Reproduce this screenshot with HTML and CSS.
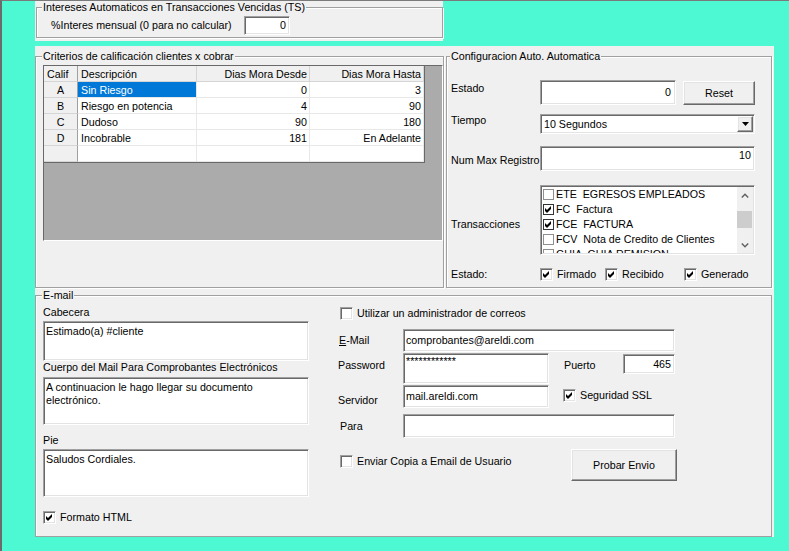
FILE: index.html
```html
<!DOCTYPE html>
<html lang="es">
<head>
<meta charset="utf-8">
<title>Configuración</title>
<link rel="stylesheet" href="styles.css">
</head>
<body>
<div class="screen">

  <section class="panel panel-top">
    <fieldset class="group g-interes">
      <legend>Intereses Automaticos en Transacciones Vencidas (TS)</legend>
      <div class="interes-row">
        <span class="interes-label">%Interes mensual (0 para no calcular)</span>
        <div class="field line num interes-input">0</div>
      </div>
    </fieldset>
  </section>

  <section class="panel panel-mid">
    <fieldset class="group g-crit">
      <legend>Criterios de calificación clientes x cobrar</legend>
      <div class="grid-box">
        <div class="grid">
          <div class="c fx hd lft">Calif</div>
          <div class="c hd">Descripción</div>
          <div class="c hd r">Dias Mora Desde</div>
          <div class="c hd r">Dias Mora Hasta</div>

          <div class="c fx">A</div>
          <div class="c sel">Sin Riesgo</div>
          <div class="c r">0</div>
          <div class="c r">3</div>

          <div class="c fx">B</div>
          <div class="c">Riesgo en potencia</div>
          <div class="c r">4</div>
          <div class="c r">90</div>

          <div class="c fx">C</div>
          <div class="c">Dudoso</div>
          <div class="c r">90</div>
          <div class="c r">180</div>

          <div class="c fx">D</div>
          <div class="c">Incobrable</div>
          <div class="c r">181</div>
          <div class="c r">En Adelante</div>

          <div class="c fx"></div>
          <div class="c"></div>
          <div class="c"></div>
          <div class="c"></div>
        </div>
      </div>
    </fieldset>

    <fieldset class="group g-conf">
      <legend>Configuracion Auto. Automatica</legend>
      <div class="conf">
        <div class="conf-row row-estado">
          <span class="lbl lbl-estado">Estado</span>
          <div class="field line num estado-input">0</div>
          <button class="btn raised reset" type="button">Reset</button>
        </div>
        <div class="conf-row row-tiempo">
          <span class="lbl">Tiempo</span>
          <div class="field select">
            <span class="sel-text">10 Segundos</span>
            <span class="drop raised">
              <svg width="7" height="4" viewBox="0 0 7 4"><polygon points="0,0 7,0 3.5,4" fill="#000"/></svg>
            </span>
          </div>
        </div>
        <div class="conf-row row-max">
          <span class="lbl lbl-max">Num Max Registro</span>
          <div class="field max-input">10</div>
        </div>
        <div class="conf-row row-trans">
          <span class="lbl lbl-trans">Transacciones</span>
          <div class="field listbox">
            <ul class="items">
              <li><span class="lbox"></span>ETE  EGRESOS EMPLEADOS</li>
              <li><span class="lbox on"><svg width="9" height="9" viewBox="0 0 9 9"><polygon points="1,3 3,5 7,1 7,4 3,8 1,6" fill="#000"/></svg></span>FC  Factura</li>
              <li><span class="lbox on"><svg width="9" height="9" viewBox="0 0 9 9"><polygon points="1,3 3,5 7,1 7,4 3,8 1,6" fill="#000"/></svg></span>FCE  FACTURA</li>
              <li><span class="lbox"></span>FCV  Nota de Credito de Clientes</li>
              <li><span class="lbox"></span>GUIA  GUIA REMISION</li>
            </ul>
            <div class="vscroll">
              <span class="sarrow">
                <svg width="8" height="5" viewBox="0 0 8 5"><polyline points="0.8,4.5 4,1.2 7.2,4.5" fill="none" stroke="#606060" stroke-width="1.4"/></svg>
              </span>
              <span class="track"><span class="thumb"></span></span>
              <span class="sarrow">
                <svg width="8" height="5" viewBox="0 0 8 5"><polyline points="0.8,0.5 4,3.8 7.2,0.5" fill="none" stroke="#606060" stroke-width="1.4"/></svg>
              </span>
            </div>
          </div>
        </div>
        <div class="conf-row row-state">
          <span class="lbl">Estado:</span>
          <label class="chk st-firm"><span class="box"><svg width="11" height="11" viewBox="0 0 11 11"><polygon points="2,4 4,6 8,2 8,5 4,9 2,7" fill="#000"/></svg></span>Firmado</label>
          <label class="chk st-rec"><span class="box"><svg width="11" height="11" viewBox="0 0 11 11"><polygon points="2,4 4,6 8,2 8,5 4,9 2,7" fill="#000"/></svg></span>Recibido</label>
          <label class="chk st-gen"><span class="box"><svg width="11" height="11" viewBox="0 0 11 11"><polygon points="2,4 4,6 8,2 8,5 4,9 2,7" fill="#000"/></svg></span>Generado</label>
        </div>
      </div>
    </fieldset>
  </section>

  <section class="panel panel-mail">
    <fieldset class="group g-mail">
      <legend>E-mail</legend>
      <div class="mail-cols">
        <div class="mail-left">
          <div class="mlbl m-cab">Cabecera</div>
          <div class="field area a-cab">Estimado(a) #cliente</div>
          <div class="mlbl m-cue">Cuerpo del Mail Para Comprobantes Electrónicos</div>
          <div class="field area a-cue">A continuacion le hago llegar su documento electrónico.</div>
          <div class="mlbl m-pie">Pie</div>
          <div class="field area a-pie">Saludos Cordiales.</div>
          <label class="chk m-html"><span class="box"><svg width="11" height="11" viewBox="0 0 11 11"><polygon points="2,4 4,6 8,2 8,5 4,9 2,7" fill="#000"/></svg></span>Formato HTML</label>
        </div>

        <div class="mail-right">
          <div class="r-util">
            <label class="chk"><span class="box"></span>Utilizar un administrador de correos</label>
          </div>
          <div class="r-row r-mail">
            <span class="rlbl"><u>E</u>-Mail</span>
            <div class="field line wide">comprobantes@areldi.com</div>
          </div>
          <div class="r-row r-pass">
            <span class="rlbl lbl-pass">Password</span>
            <div class="field pass">************</div>
            <span class="lbl-puerto">Puerto</span>
            <div class="field line num puerto">465</div>
          </div>
          <div class="r-row r-serv">
            <span class="rlbl lbl-serv">Servidor</span>
            <div class="field line serv">mail.areldi.com</div>
            <label class="chk ssl"><span class="box"><svg width="11" height="11" viewBox="0 0 11 11"><polygon points="2,4 4,6 8,2 8,5 4,9 2,7" fill="#000"/></svg></span>Seguridad SSL</label>
          </div>
          <div class="r-row r-para">
            <span class="rlbl lbl-para">Para</span>
            <div class="field line wide para"></div>
          </div>
          <div class="r-row r-send">
            <label class="chk copia"><span class="box"></span>Enviar Copia a Email de Usuario</label>
            <button class="btn raised probar" type="button">Probar Envio</button>
          </div>
        </div>
      </div>
    </fieldset>
  </section>

</div>
</body>
</html>
```
FILE: styles.css
```css
* { box-sizing: border-box; }

html, body { margin: 0; padding: 0; }

body {
  width: 789px;
  height: 551px;
  overflow: hidden;
  background: #4cf9d2;
  font-family: "Liberation Sans", Arial, sans-serif;
  font-size: 10.7px;
  line-height: 13px;
  color: #000;
}

.screen {
  height: 551px;
  border-left: 2px solid #6b6b6b;
  border-top: 1px solid #7a7a7a;
  padding-left: 33px;
}

.panel { background: #f0f0f0; }

.panel-top { width: 408px; height: 40px; }

.panel-mid {
  width: 739px;
  height: 243px;
  margin-top: 5px;
  padding-top: 4px;
  display: flex;
}

.panel-mail { width: 739px; height: 248px; }

/* group boxes (etched frame) */
.group {
  margin: 0;
  padding: 0;
  min-width: 0;
  border: 1px solid #a0a0a0;
  box-shadow: inset 1px 1px 0 #fff, 1px 1px 0 #fff;
}

.group > legend {
  padding: 0 1px;
  margin-left: 6px;
  line-height: 13px;
  background: #f0f0f0;
}

.g-interes { margin-left: 1px; width: 407px; height: 37px; }
.g-interes > legend { margin-left: 5px; }

.g-crit { width: 409px; height: 238px; }
.g-conf { margin-left: 2px; width: 326px; height: 238px; }
.g-conf > legend { margin-left: 3px; }
.g-mail { width: 737px; height: 248px; box-shadow: inset 1px 1px 0 #fff; }

/* sunken fields */
.field {
  background: #fff;
  border: 1px solid;
  border-color: #a0a0a0 #fff #fff #a0a0a0;
  box-shadow: inset 1px 1px 0 #696969, inset -1px -1px 0 #e3e3e3;
  white-space: nowrap;
  overflow: hidden;
}

.line {
  display: flex;
  align-items: center;
  padding: 0 3px;
}

.num { justify-content: flex-end; }

/* raised buttons */
.raised {
  background: #f0f0f0;
  border: 1px solid;
  border-color: #fff #696969 #696969 #fff;
  box-shadow: inset -1px -1px 0 #a0a0a0, inset 1px 1px 0 #e3e3e3;
}

.btn {
  font: inherit;
  color: #000;
  padding: 0;
  margin: 0;
}

/* checkboxes */
.chk {
  display: flex;
  align-items: center;
  gap: 4px;
  white-space: nowrap;
}

.box {
  flex: none;
  width: 13px;
  height: 13px;
  background: #fff;
  border: 1px solid;
  border-color: #a0a0a0 #fff #fff #a0a0a0;
  box-shadow: inset 1px 1px 0 #696969, inset -1px -1px 0 #e3e3e3;
}

.box svg { display: block; }

/* top panel */
.interes-row {
  display: flex;
  align-items: center;
  margin-top: 2px;
  padding-left: 14px;
}

.interes-label { width: 193px; white-space: nowrap; }
.interes-input { width: 46px; height: 19px; }

/* grid */
.grid-box {
  margin: 2px 0 0 7px;
  width: 400px;
  height: 176px;
  background: #ababab;
  border: 1px solid;
  border-color: #696969 #fff #fff #696969;
}

.grid {
  display: grid;
  grid-template-columns: 34px 119px 113px 114px;
  grid-auto-rows: 16px;
  width: 381px;
  background: #fff;
  border-right: 1px solid #696969;
  border-bottom: 1px solid #696969;
}

.c {
  border-right: 1px solid #e8e8e8;
  border-bottom: 1px solid #e8e8e8;
  padding: 2px 3px 0;
  line-height: 13px;
  white-space: nowrap;
  overflow: hidden;
}

.c.r { text-align: right; padding-right: 2px; }

.hd { background: #f0f0f0; border-bottom-color: #d5d5d5; border-right-color: #d5d5d5; }

.fx {
  background: #f0f0f0;
  text-align: center;
  border-right-color: #a0a0a0;
  border-bottom-color: #d5d5d5;
}

.fx.lft { text-align: left; padding-left: 3px; }

.sel { background: #0078d7; color: #fff; }

/* config */
.conf { padding-left: 4px; }

.conf-row { display: flex; }

.lbl { width: 89px; flex: none; white-space: nowrap; }

.row-estado { margin-top: 17px; height: 25px; }
.lbl-estado { margin-top: 2px; }
.estado-input { width: 136px; height: 25px; padding-right: 4px; }
.reset { margin-left: 7px; margin-top: 1px; width: 72px; height: 24px; }

.row-tiempo { margin-top: 9px; height: 20px; }

.select {
  width: 215px;
  height: 20px;
  display: flex;
  align-items: center;
  padding: 1px;
}

.sel-text { flex: 1; padding-left: 2px; }

.drop {
  width: 16px;
  height: 16px;
  display: flex;
  align-items: center;
  justify-content: center;
}

.drop svg { display: block; }

.row-max { margin-top: 12px; height: 25px; }
.lbl-max { margin-top: 8px; }
.max-input { width: 215px; height: 25px; text-align: right; padding: 2px 3px 0; }

.row-trans { margin-top: 14px; height: 70px; }
.lbl-trans { margin-top: 33px; }

.listbox {
  width: 215px;
  height: 70px;
  display: flex;
  padding: 1px;
}

.items {
  flex: 1;
  margin: 0;
  padding: 0;
  list-style: none;
  overflow: hidden;
}

.items li {
  height: 15px;
  display: flex;
  align-items: center;
  white-space: pre;
}

.lbox {
  flex: none;
  width: 11px;
  height: 11px;
  margin: 0 2px 0 1px;
  background: #fff;
  border: 1px solid #8f8f8f;
}

.lbox.on { border-color: #333; }
.lbox svg { display: block; }

.vscroll {
  width: 16px;
  display: flex;
  flex-direction: column;
  background: #f0f0f0;
}

.sarrow {
  height: 16px;
  display: flex;
  align-items: center;
  justify-content: center;
}

.sarrow svg { display: block; }

.track { flex: 1; }

.thumb {
  display: block;
  margin: 8px 1px 0 0;
  height: 17px;
  background: #cdcdcd;
}

.row-state { margin-top: 11px; height: 17px; align-items: center; }
.st-firm { width: 65px; }
.st-rec { width: 79px; }

/* mail */
.mail-cols { display: flex; }

.mail-left { width: 273px; padding-left: 7px; }

.mlbl { white-space: nowrap; }

.area {
  width: 266px;
  padding: 3px 2px 0 2px;
  line-height: 13px;
  white-space: normal;
}

.m-cab { margin-top: 4px; }
.a-cab { margin-top: 2px; height: 40px; }
.m-cue { margin-top: 0; }
.a-cue { margin-top: 3px; height: 48px; }
.m-pie { margin-top: 9px; }
.a-pie { margin-top: 2px; height: 48px; }
.m-html { margin-top: 14px; }

.mail-right { margin-left: 29px; width: 400px; }

.r-util { margin-top: 5px; margin-left: 2px; }

.r-row { display: flex; }

.rlbl { width: 65px; flex: none; white-space: nowrap; padding-left: 1px; }

.r-mail { margin-top: 9px; height: 23px; align-items: center; }
.wide { width: 272px; height: 23px; padding-left: 2px; }

.r-pass { margin-top: 1px; height: 31px; }
.lbl-pass { margin-top: 6px; padding-left: 0; }
.pass { width: 146px; height: 31px; padding: 1px 2px 0; }
.lbl-puerto { margin-left: 15px; width: 59px; margin-top: 6px; }
.puerto { width: 52px; height: 20px; margin-top: 1px; }

.r-serv { margin-top: 1px; height: 23px; }
.lbl-serv { margin-top: 9px; padding-left: 0; }
.serv { width: 146px; height: 23px; padding-left: 2px; }
.ssl { margin-left: 14px; margin-top: 4px; height: 13px; }

.r-para { margin-top: 6px; height: 24px; align-items: center; }
.lbl-para { padding-left: 2px; }
.para { height: 24px; }

.r-send { margin-top: 11px; }
.copia { width: 231px; margin-left: 2px; margin-top: 6px; height: 13px; }
.probar { width: 106px; height: 32px; }
```
